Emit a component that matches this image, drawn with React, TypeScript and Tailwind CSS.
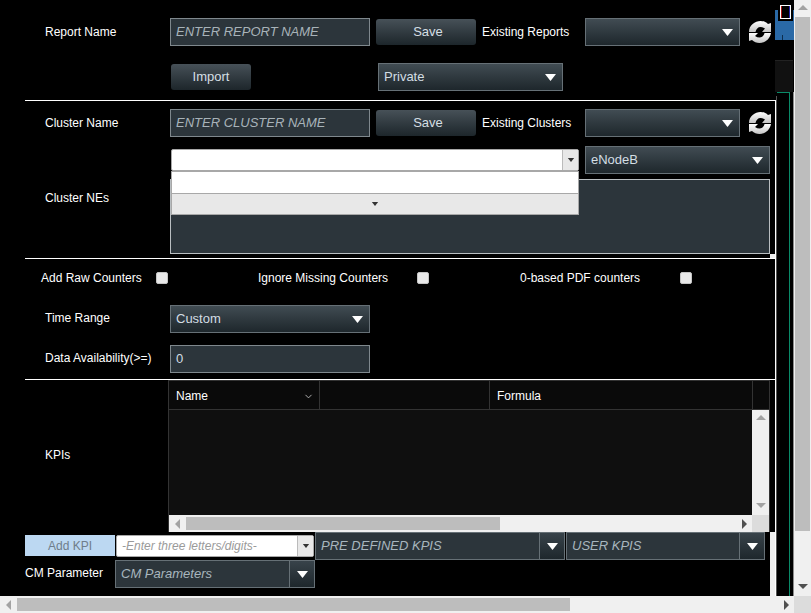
import React from "react";
import { ChevronDown } from "lucide-react";

function Tri({ color = "#fff", w = 11, h = 7 }: { color?: string; w?: number; h?: number }) {
  return (
    <svg width={w} height={h} viewBox="0 0 11 7" className="shrink-0">
      <path d="M0 0h11L5.5 7z" fill={color} />
    </svg>
  );
}

function Arrow({ dir, color = "#a3a3a3" }: { dir: "up" | "down" | "left" | "right"; color?: string }) {
  const d = { up: "M0 6 5 1l5 5z", down: "M0 2h10L5 7z", left: "M7 0v10L2 5z", right: "M3 0v10l5-5z" }[dir];
  return (
    <svg width="10" height="10" viewBox="0 0 10 10" className="shrink-0">
      <path d={d} fill={color} />
    </svg>
  );
}

function Select({ label, className }: { label?: string; className: string }) {
  return (
    <div className={`flex h-[28px] items-center justify-between border border-[#667076] bg-gradient-to-b from-[#414c53] to-[#1e272c] pl-[5px] pr-[6px] text-[13px] text-[#d3dee4] ${className}`}>
      <span className="pb-[1px]">{label}</span>
      <Tri />
    </div>
  );
}

function SplitSelect({ label, className }: { label: string; className: string }) {
  return (
    <div className={`flex h-[28px] items-stretch border border-[#667076] bg-[#2c353b] text-[13px] italic text-[#a8b6be] ${className}`}>
      <span className="flex-1 self-center pb-[1px] pl-[5px]">{label}</span>
      <span className="flex w-[25px] items-center justify-center border-l border-[#667076] bg-gradient-to-b from-[#38434a] to-[#1e272c]">
        <Tri />
      </span>
    </div>
  );
}

function TextBox({ placeholder, value }: { placeholder?: string; value?: string }) {
  return (
    <div className="flex h-[28px] w-[200px] items-center border border-[#7f888d] bg-[#2c353b] pl-[5px] text-[13px]">
      {value ? <span className="text-[#d3dee4]">{value}</span> : <span className="italic text-[#a8b3b9]">{placeholder}</span>}
    </div>
  );
}

function Btn({ label, className }: { label: string; className: string }) {
  return (
    <div className={`flex h-[26px] items-center justify-center rounded-[3px] bg-gradient-to-b from-[#475158] to-[#1d262b] pb-[1px] text-[13px] text-[#d5dfe4] ${className}`}>
      {label}
    </div>
  );
}

function Combo({ placeholder, className }: { placeholder?: string; className: string }) {
  return (
    <div className={`flex h-[22px] items-stretch rounded-[2px] border border-[#a8a8a8] bg-white ${className}`}>
      <span className="flex-1 self-center pl-[5px] text-[12px] italic text-[#9a9a9a]">{placeholder}</span>
      <span className="flex w-[16px] items-center justify-center border-l border-[#bbb] bg-[#e8e8e8]">
        <Tri color="#333" w={8} h={4} />
      </span>
    </div>
  );
}

function Check() {
  return <span className="h-[12px] w-[12px] shrink-0 rounded-[2px] border border-[#c4c4c4] bg-[#e9e9e9]" />;
}

function Divider() {
  return <div className="ml-[25px] h-px w-[750px] bg-white" />;
}

function Refresh() {
  return (
    <svg width="22" height="22" viewBox="0 0 22 22" className="ml-[9px] shrink-0">
      <defs>
        <linearGradient id="refreshShade" x1="0" y1="0" x2="0" y2="1">
          <stop offset="0" stopColor="#ffffff" />
          <stop offset="1" stopColor="#c4c4c4" />
        </linearGradient>
      </defs>
      <path fill="url(#refreshShade)" d="M0 11C0 4 6 0 11.500 0c3 0 5.500 1 7.500 3l3-1v9h-9l3-3.500C14.500 6.500 13 6 11.500 6 9 6 7 8 6.500 11z" />
      <path fill="url(#refreshShade)" d="M22 12c-1 6-6 10-11.500 10-3 0-5.500-1-7.500-3l-3 1v-8h9l-3 3c1.500 1 3 1.500 4.500 1.500 2.500 0 4.500-2 5-4.500z" />
    </svg>
  );
}

function KpiTable() {
  return (
    <div className="flex h-[152px] w-[602px] flex-col border-l border-r border-t border-[#333]">
      <div className="flex h-[29px] shrink-0 border-b border-[#333] bg-[#0a0a0a] text-[12px] text-white">
        <div className="flex w-[151px] items-center justify-between border-r border-[#333] pl-[7px] pr-[5px] pt-[2px]">
          Name
          <ChevronDown size={11} className="text-[#bbb]" />
        </div>
        <div className="w-[170px] border-r border-[#333]" />
        <div className="flex w-[263px] items-center border-r border-[#333] pl-[7px] pt-[2px]">Formula</div>
      </div>
      <div className="flex flex-1">
        <div className="flex-1 bg-[#0f0f0f]" />
        <div className="flex w-[17px] flex-col items-center justify-between bg-[#f0f0f0] py-[4px]">
          <Arrow dir="up" />
          <Arrow dir="down" />
        </div>
      </div>
      <div className="flex h-[17px] shrink-0 bg-[#f0f0f0]">
        <div className="flex w-[17px] items-center justify-center"><Arrow dir="left" /></div>
        <div className="my-[2px] w-[314px] bg-[#bdbdbd]" />
        <div className="flex flex-1 items-center justify-end pr-[3px]"><Arrow dir="right" color="#505050" /></div>
        <div className="w-[17px] bg-[#dcdcdc]" />
      </div>
    </div>
  );
}

function SideStrip() {
  return (
    <div className="flex w-[19px] flex-col">
      <svg width="19" height="60" viewBox="0 0 19 60" className="shrink-0">
        <rect x="0" y="10" width="19" height="30" fill="#2a69a6" />
        <rect x="7" y="35" width="1" height="5" fill="#0d2d4d" />
        <rect x="3" y="0" width="15" height="21" fill="#000" />
        <rect x="5.500" y="5.500" width="10" height="13" fill="none" stroke="#fff" />
        <rect x="6" y="6" width="1" height="12" fill="#a11" />
        <rect x="14" y="6" width="1" height="12" fill="#22a" />
      </svg>
      <div className="h-[32px] w-[18px] shrink-0 border-t border-[#222] bg-[#111]" />
      <div className="flex flex-1">
        <div className="mt-[8px] w-px bg-white" />
        <div className="mt-[4px] w-px bg-[#555]" />
        <div className="w-[12px] border-t border-[#0a8a68]" />
        <div className="w-px bg-[#0a8a68]" />
        <div className="w-[3px]" />
        <div className="w-px bg-[#8c8c8c]" />
      </div>
    </div>
  );
}

export default function App() {
  return (
    <div className="flex h-[613px] w-[811px] flex-col overflow-hidden bg-black font-['Liberation_Sans',Arial,sans-serif] text-[12px] text-white">
      <div className="flex h-[596px]">
        <div className="flex w-[775px] shrink-0 flex-col">
          {/* report */}
          <div className="mt-[18px] flex h-[28px] items-center">
            <span className="w-[170px] pl-[45px]">Report Name</span>
            <TextBox placeholder="ENTER REPORT NAME" />
            <Btn label="Save" className="ml-[6px] w-[100px] pl-[4px]" />
            <span className="ml-[6px] w-[103px]">Existing Reports</span>
            <Select className="w-[155px]" />
            <Refresh />
          </div>
          <div className="mt-[17px] flex h-[28px] items-center">
            <Btn label="Import" className="ml-[171px] w-[80px]" />
            <Select label="Private" className="ml-[127px] w-[185px]" />
          </div>
          <div className="mt-[9px]"><Divider /></div>

          {/* cluster */}
          <div className="mt-[8px] flex h-[28px] items-center">
            <span className="w-[170px] pl-[45px]">Cluster Name</span>
            <TextBox placeholder="ENTER CLUSTER NAME" />
            <Btn label="Save" className="ml-[6px] w-[100px] pl-[4px]" />
            <span className="ml-[6px] w-[103px]">Existing Clusters</span>
            <Select className="w-[155px]" />
            <Refresh />
          </div>
          <div className="mt-[9px] flex h-[108px]">
            <span className="w-[170px] self-center pb-[4px] pl-[45px]">Cluster NEs</span>
            <div className="relative w-[600px]">
              <div className="flex h-[28px] items-center">
                <Combo className="ml-px w-[408px]" />
                <Select label="eNodeB" className="ml-[6px] w-[185px]" />
              </div>
              <div className="mt-[5px] h-[75px] w-[600px] border border-[#b9bec1] bg-[#2c353b]" />
              <div className="absolute left-px top-[25px] w-[408px] border border-[#a8a8a8]">
                <div className="h-[22px] border-b border-[#a8a8a8] bg-white" />
                <div className="flex h-[20px] items-center justify-center bg-[#e8e8e8]">
                  <Tri color="#333" w={8} h={4} />
                </div>
              </div>
            </div>
          </div>
          <div className="flex h-[4px] justify-end">
            <div className="w-[5px] bg-[#f0f0f0]" />
          </div>
          <Divider />

          {/* options */}
          <div className="mt-[12px] flex h-[14px] items-center">
            <span className="ml-[41px] w-[115px]">Add Raw Counters</span>
            <Check />
            <span className="ml-[90px] w-[159px]">Ignore Missing Counters</span>
            <Check />
            <span className="ml-[91px] w-[160px]">0-based PDF counters</span>
            <Check />
          </div>
          <div className="mt-[20px] flex h-[28px] items-center">
            <span className="w-[170px] pb-[2px] pl-[45px]">Time Range</span>
            <Select label="Custom" className="w-[200px]" />
          </div>
          <div className="mt-[12px] flex h-[28px] items-center">
            <span className="w-[170px] pb-[2px] pl-[45px]">Data Availability(&gt;=)</span>
            <TextBox value="0" />
          </div>
          <div className="mt-[6px]"><Divider /></div>

          {/* kpis */}
          <div className="flex">
            <span className="w-[168px] self-center pb-[2px] pl-[45px]">KPIs</span>
            <KpiTable />
          </div>
          <div className="flex flex-1">
            <div className="w-[770px]">
              <div className="flex h-[28px]">
                <div className="ml-[25px] mt-[3px] flex h-[21px] w-[90px] items-center justify-center bg-[#bcd8f2] text-[#6f7d8a]">Add KPI</div>
                <Combo placeholder="-Enter three letters/digits-" className="ml-px mt-[3px] w-[198px]" />
                <SplitSelect label="PRE DEFINED KPIS" className="ml-px w-[250px]" />
                <SplitSelect label="USER KPIS" className="ml-px w-[199px]" />
              </div>
              <div className="flex h-[28px] items-center">
                <span className="ml-[25px] w-[90px] pb-[2px]">CM Parameter</span>
                <SplitSelect label="CM Parameters" className="w-[200px]" />
              </div>
            </div>
            <div className="w-[5px] bg-[#f0f0f0]" />
          </div>
        </div>
        <SideStrip />

        {/* page scrollbar */}
        <div className="flex w-[17px] flex-col bg-[#f0f0f0]">
          <div className="flex h-[17px] items-center justify-center"><Arrow dir="up" /></div>
          <div className="mx-auto h-[514px] w-[15px] bg-[#bdbdbd]" />
          <div className="flex flex-1 items-end justify-center pb-[4px]"><Arrow dir="down" color="#505050" /></div>
        </div>
      </div>
      <div className="flex h-[17px] bg-[#f0f0f0]">
        <div className="flex w-[17px] items-center justify-center"><Arrow dir="left" /></div>
        <div className="my-[2px] w-[553px] bg-[#bdbdbd]" />
        <div className="flex w-[224px] items-center justify-end pr-[3px]"><Arrow dir="right" color="#505050" /></div>
        <div className="flex-1 bg-[#dcdcdc]" />
      </div>
    </div>
  );
}
